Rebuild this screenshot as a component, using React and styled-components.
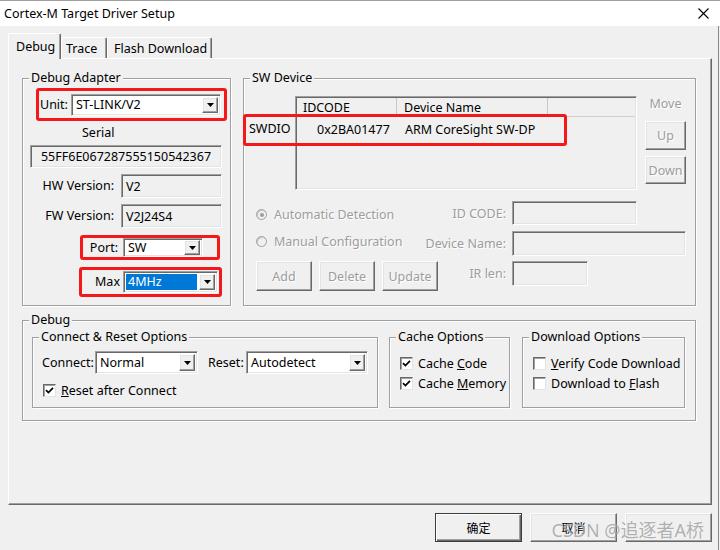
import React from "react";
import styled, { createGlobalStyle } from "styled-components";

const GlobalStyle = createGlobalStyle`
  html, body { margin: 0; padding: 0; background: #f0f0f0; }
  body {
    font-family: "Noto Sans", "Open Sans", "Noto Sans CJK SC", sans-serif;
    font-size: 12.5px;
    color: #000;
  }
  * { box-sizing: border-box; }
`;

const Window = styled.div`
  position: relative;
  width: 720px;
  height: 550px;
  background: #f0f0f0;
  overflow: hidden;
  box-shadow: inset -1px 0 0 #f0f0f0, inset -2px 0 0 #8a8a8a;
`;

const TitleBar = styled.div`
  height: 26px;
  background: #fff;
  border-top: 1px solid #a0a0a0;
  display: flex;
  align-items: center;
  justify-content: space-between;
  padding: 0 11px 0 4px;
  font-size: 12.5px;
`;

const Body = styled.div`
  padding: 7px 8px 0 8px;
`;

const TabStrip = styled.div`
  display: flex;
  align-items: flex-end;
  height: 26px;
  position: relative;
  z-index: 1;
  margin-bottom: -1px;
`;

const Tab = styled.div`
  width: ${(p) => p.$w}px;
  height: ${(p) => (p.$active ? 26 : 21)}px;
  margin-bottom: ${(p) => (p.$active ? 0 : 1)}px;
  padding-left: ${(p) => p.$pl}px;
  display: flex;
  align-items: center;
  background: #f0f0f0;
  border-top: 1px solid #fff;
  border-left: 1px solid #fff;
  border-right: 1px solid #696969;
  box-shadow: inset -1px 0 0 #a0a0a0;
  border-radius: 2px 2px 0 0;
  white-space: nowrap;
`;

const Panel = styled.div`
  width: 704px;
  height: 447px;
  border-top: 1px solid #fff;
  border-left: 1px solid #fff;
  border-right: 1px solid #696969;
  border-bottom: 1px solid #696969;
  box-shadow: inset -1px -1px 0 #a0a0a0;
  padding: 19px 0 0 13px;
  display: flex;
  flex-direction: column;
  gap: 14px;
`;

const TopRow = styled.div`
  display: flex;
  gap: 12px;
`;

const Group = styled.div`
  position: relative;
  flex-shrink: 0;
  width: ${(p) => p.$w}px;
  height: ${(p) => p.$h}px;
  margin-left: ${(p) => p.$ml || 0}px;
  border: 1px solid #a0a0a0;
  box-shadow: inset 1px 1px 0 #fff, 1px 1px 0 #fff;
`;

const Legend = styled.span`
  position: absolute;
  top: -9px;
  left: 6px;
  padding: 0 2px;
  line-height: 16px;
  background: #f0f0f0;
  white-space: nowrap;
`;

const Column = styled.div`
  display: flex;
  flex-direction: column;
  align-items: flex-start;
`;

const Annot = styled.div`
  display: flex;
  align-items: center;
  justify-content: ${(p) => (p.$spread ? "space-between" : "flex-start")};
  width: ${(p) => p.$w}px;
  height: ${(p) => p.$h}px;
  margin: ${(p) => p.$mt}px 0 0 ${(p) => p.$ml}px;
  padding: ${(p) => (p.$spread ? "0 3px 0 1px" : "0")};
  border: 3px solid #f5181a;
  border-radius: 3px;
`;

const RowOverlay = styled.div`
  position: absolute;
  left: -1px;
  top: 35px;
  width: 324px;
  height: 32px;
  border: 3px solid #f5181a;
  border-radius: 3px;
  pointer-events: none;
`;

const FieldLabel = styled.span`
  flex-shrink: 0;
  width: ${(p) => (p.$w ? `${p.$w}px` : "auto")};
  text-align: ${(p) => p.$align || "left"};
  padding: 0 ${(p) => p.$pr || 0}px 0 ${(p) => p.$pl || 0}px;
  margin-left: ${(p) => p.$ml || 0}px;
  line-height: 16px;
  white-space: nowrap;
  color: ${(p) => (p.$disabled ? "#9d9d9d" : "#000")};
  text-shadow: ${(p) => (p.$disabled ? "1px 1px 0 #fff" : "none")};
`;

const sunken = `
  border: 1px solid;
  border-color: #a0a0a0 #fff #fff #a0a0a0;
  box-shadow: inset 1px 1px 0 #696969, inset -1px -1px 0 #e3e3e3;
`;

const raised = `
  border: 1px solid;
  border-color: #fff #696969 #696969 #fff;
  box-shadow: inset -1px -1px 0 #a0a0a0, inset 1px 1px 0 #e3e3e3;
`;

const SelectBox = styled.div`
  flex-shrink: 0;
  display: flex;
  align-items: stretch;
  width: ${(p) => p.$w}px;
  height: ${(p) => p.$h || 22}px;
  background: #fff;
  ${sunken}
  padding: ${(p) => (p.$h < 21 ? "1px 2px" : "2px")};
`;

const SelectValue = styled.div`
  flex: 1;
  display: flex;
  align-items: center;
  padding-left: 2px;
  margin-right: 2px;
  line-height: 14px;
  white-space: nowrap;
  overflow: hidden;
  background: ${(p) => (p.$highlight ? "#0078d7" : "transparent")};
  color: ${(p) => (p.$highlight ? "#fff" : "#000")};
`;

const DropButton = styled.div`
  width: 16px;
  flex-shrink: 0;
  background: #f0f0f0;
  ${raised}
  display: flex;
  align-items: center;
  justify-content: center;
`;

const Arrow = () => (
  <svg width="7" height="4" viewBox="0 0 7 4">
    <polygon points="0,0 7,0 3.5,4" fill="#000" />
  </svg>
);

function Select({ w, h, value, highlight }) {
  return (
    <SelectBox $w={w} $h={h}>
      <SelectValue $highlight={highlight}>{value}</SelectValue>
      <DropButton>
        <Arrow />
      </DropButton>
    </SelectBox>
  );
}

const TextField = styled.div`
  flex-shrink: 0;
  width: ${(p) => p.$w}px;
  height: ${(p) => p.$h}px;
  margin: ${(p) => p.$mt || 0}px 0 0 ${(p) => p.$ml || 0}px;
  background: #f0f0f0;
  ${sunken}
  display: flex;
  align-items: center;
  justify-content: ${(p) => (p.$center ? "center" : "flex-start")};
  padding-left: ${(p) => (p.$center ? 0 : 4)}px;
  white-space: nowrap;
`;

const Caption = styled.div`
  margin: ${(p) => p.$mt}px 0 0 ${(p) => p.$ml}px;
  line-height: 16px;
`;

const InfoRow = styled.div`
  display: flex;
  align-items: center;
  gap: 7px;
  margin-top: 6px;
`;

/* SW device */
const DeviceTop = styled.div`
  display: flex;
  margin-top: 17px;
`;

const RowHeader = styled.div`
  width: 51px;
  padding: 25px 0 0 5px;
  line-height: 16px;
`;

const ListView = styled.div`
  width: 342px;
  height: 94px;
  ${sunken}
  background: #f0f0f0;
  padding: 1px;
`;

const ListHeader = styled.div`
  display: flex;
  height: 19px;
  border-bottom: 1px solid #d0d0d0;
`;

const HeadCell = styled.div`
  width: ${(p) => (p.$w ? `${p.$w}px` : "auto")};
  flex: ${(p) => (p.$w ? "none" : 1)};
  padding-left: ${(p) => p.$pl}px;
  display: flex;
  align-items: center;
  white-space: nowrap;
  border-right: ${(p) => (p.$w ? "1px solid #c8c8c8" : "none")};
`;

const ListRow = styled.div`
  display: flex;
  height: 24px;
  align-items: center;
`;

const Cell = styled.div`
  width: ${(p) => p.$w}px;
  padding-left: ${(p) => p.$pl}px;
  white-space: nowrap;
`;

const MoveCol = styled.div`
  width: 41px;
  margin-left: 8px;
  display: flex;
  flex-direction: column;
  align-items: stretch;
`;

const MoveLabel = styled.div`
  text-align: center;
  line-height: 16px;
  color: #9d9d9d;
  text-shadow: 1px 1px 0 #fff;
  margin-bottom: 9px;
`;

const Button = styled.div`
  flex-shrink: 0;
  width: ${(p) => (p.$w ? `${p.$w}px` : "auto")};
  height: ${(p) => p.$h}px;
  margin-top: ${(p) => p.$mt || 0}px;
  background: #f0f0f0;
  ${raised}
  ${(p) =>
    p.$default &&
    `border-color: #3c3c3c; box-shadow: inset 1px 1px 0 #fff, inset -1px -1px 0 #696969, inset -2px -2px 0 #a0a0a0;`}
  display: flex;
  align-items: center;
  justify-content: center;
  color: ${(p) => (p.$disabled ? "#9d9d9d" : "#000")};
  text-shadow: ${(p) => (p.$disabled ? "1px 1px 0 #fff" : "none")};
  font-family: ${(p) =>
    p.$cjk ? '"Noto Sans CJK SC", sans-serif' : "inherit"};
  font-size: ${(p) => (p.$cjk ? "12px" : "inherit")};
`;

const DeviceBottom = styled.div`
  display: grid;
  grid-template-columns: 157px 87px 1fr;
  grid-template-rows: 25px 25px 30px;
  column-gap: 6px;
  row-gap: 5px;
  margin-top: 11px;
  padding-left: 12px;
`;

const RadioRow = styled.div`
  display: flex;
  align-items: center;
  gap: 7px;
  align-self: center;
  margin-top: ${(p) => p.$shift || 0}px;
  white-space: nowrap;
`;

const RadioDot = styled.span`
  width: 11px;
  height: 11px;
  border-radius: 50%;
  border: 1px solid #a0a0a0;
  background: #f0f0f0;
  box-shadow: inset 1px 1px 0 #c8c8c8;
  display: flex;
  align-items: center;
  justify-content: center;
  &::after {
    content: "";
    width: 4px;
    height: 4px;
    border-radius: 50%;
    background: ${(p) => (p.$checked ? "#9d9d9d" : "transparent")};
  }
`;

const GridLabel = styled(FieldLabel)`
  align-self: ${(p) => (p.$top ? "start" : "center")};
  margin-top: ${(p) => (p.$top ? 5 : 0)}px;
`;

const ButtonRow = styled.div`
  display: flex;
  gap: 7px;
`;

/* Debug group */
const DebugRow = styled.div`
  display: flex;
  margin-top: 16px;
  padding-left: 9px;
`;

const ConnectRow = styled.div`
  display: flex;
  align-items: center;
  margin: 13px 0 0 9px;
`;

const CheckList = styled.div`
  display: flex;
  flex-direction: column;
  padding: ${(p) => p.$pt}px 0 0 ${(p) => p.$pl}px;
`;

const CheckRow = styled.div`
  display: flex;
  align-items: center;
  gap: 5px;
  height: 20px;
  white-space: nowrap;
`;

const Box = styled.span`
  width: 13px;
  height: 13px;
  flex-shrink: 0;
  background: #fff;
  border: 1px solid;
  border-color: #696969 #e3e3e3 #e3e3e3 #696969;
  box-shadow: inset 1px 1px 0 #a0a0a0;
  display: flex;
  align-items: center;
  justify-content: center;
`;

function Check({ checked, children }) {
  return (
    <CheckRow>
      <Box>
        {checked && (
          <svg width="9" height="9" viewBox="0 0 9 9">
            <path d="M1 4.2 L3.4 6.6 L8 1.8" stroke="#000" strokeWidth="1.7" fill="none" />
          </svg>
        )}
      </Box>
      <span>{children}</span>
    </CheckRow>
  );
}

const Footer = styled.div`
  display: flex;
  justify-content: flex-end;
  gap: 8px;
  margin-top: 8px;
`;

const Watermark = styled.div`
  position: absolute;
  right: 16px;
  bottom: 8px;
  font-family: "Noto Sans", "Noto Sans CJK SC", sans-serif;
  font-size: 18px;
  line-height: 24px;
  color: rgba(110, 110, 110, 0.55);
  text-shadow: 0 0 1px rgba(255, 255, 255, 0.8);
  pointer-events: none;
  white-space: nowrap;
`;

export default function App() {
  return (
    <Window>
      <GlobalStyle />
      <TitleBar>
        <span>Cortex-M Target Driver Setup</span>
        <svg width="11" height="11" viewBox="0 0 11 11">
          <path d="M0.5 0.5 L10.5 10.5 M10.5 0.5 L0.5 10.5" stroke="#000" strokeWidth="1.1" />
        </svg>
      </TitleBar>
      <Body>
        <TabStrip>
          <Tab $w={53} $pl={7} $active>Debug</Tab>
          <Tab $w={46} $pl={4}>Trace</Tab>
          <Tab $w={105} $pl={6}>Flash Download</Tab>
        </TabStrip>
        <Panel>
          <TopRow>
            <Group $w={209} $h={228}>
              <Legend>Debug Adapter</Legend>
              <Column>
                <Annot $w={191} $h={33} $mt={9} $ml={13} $spread>
                  <FieldLabel>Unit:</FieldLabel>
                  <Select w={150} h={22} value="ST-LINK/V2" />
                </Annot>
                <Caption $mt={4} $ml={59}>Serial</Caption>
                <TextField $w={192} $h={23} $mt={4} $ml={7} $center>
                  55FF6E067287555150542367
                </TextField>
                <InfoRow>
                  <FieldLabel $w={91} $align="right">HW Version:</FieldLabel>
                  <TextField $w={101} $h={24}>V2</TextField>
                </InfoRow>
                <InfoRow>
                  <FieldLabel $w={91} $align="right">FW Version:</FieldLabel>
                  <TextField $w={101} $h={24}>V2J24S4</TextField>
                </InfoRow>
                <Annot $w={140} $h={25} $mt={7} $ml={57}>
                  <FieldLabel $w={40} $align="right" $pr={5}>Port:</FieldLabel>
                  <Select w={80} h={19} value="SW" />
                </Annot>
                <Annot $w={143} $h={30} $mt={7} $ml={56}>
                  <FieldLabel $w={41} $align="right" $pr={3}>Max</FieldLabel>
                  <Select w={95} h={22} value="4MHz" highlight />
                </Annot>
              </Column>
            </Group>
            <Group $w={453} $h={228}>
              <Legend>SW Device</Legend>
              <DeviceTop>
                <RowHeader>SWDIO</RowHeader>
                <ListView>
                  <ListHeader>
                    <HeadCell $w={100} $pl={6}>IDCODE</HeadCell>
                    <HeadCell $w={151} $pl={7}>Device Name</HeadCell>
                    <HeadCell $pl={0} />
                  </ListHeader>
                  <ListRow>
                    <Cell $w={100} $pl={20}>0x2BA01477</Cell>
                    <Cell $w={200} $pl={8}>ARM CoreSight SW-DP</Cell>
                  </ListRow>
                </ListView>
                <MoveCol>
                  <MoveLabel>Move</MoveLabel>
                  <Button $h={29} $disabled>Up</Button>
                  <Button $h={28} $mt={6} $disabled>Down</Button>
                </MoveCol>
              </DeviceTop>
              <DeviceBottom>
                <RadioRow $shift={2}>
                  <RadioDot $checked />
                  <FieldLabel $disabled>Automatic Detection</FieldLabel>
                </RadioRow>
                <GridLabel $align="right" $disabled>ID CODE:</GridLabel>
                <TextField $w={125} $h={24} />
                <RadioRow $shift={-4}>
                  <RadioDot />
                  <FieldLabel $disabled>Manual Configuration</FieldLabel>
                </RadioRow>
                <GridLabel $align="right" $disabled>Device Name:</GridLabel>
                <TextField $w={174} $h={25} />
                <ButtonRow>
                  <Button $w={56} $h={30} $disabled>Add</Button>
                  <Button $w={56} $h={30} $disabled>Delete</Button>
                  <Button $w={56} $h={30} $disabled>Update</Button>
                </ButtonRow>
                <GridLabel $align="right" $disabled $top>IR len:</GridLabel>
                <TextField $w={76} $h={25} />
              </DeviceBottom>
              <RowOverlay />
            </Group>
          </TopRow>
          <Group $w={674} $h={101}>
            <Legend>Debug</Legend>
            <DebugRow>
              <Group $w={346} $h={71}>
                <Legend>Connect &amp; Reset Options</Legend>
                <ConnectRow>
                  <FieldLabel $w={53}>Connect:</FieldLabel>
                  <Select w={103} h={23} value="Normal" />
                  <FieldLabel $w={38} $ml={10}>Reset:</FieldLabel>
                  <Select w={122} h={23} value="Autodetect" />
                </ConnectRow>
                <CheckList $pt={6} $pl={10}>
                  <Check checked>
                    <u>R</u>eset after Connect
                  </Check>
                </CheckList>
              </Group>
              <Group $w={121} $h={71} $ml={11}>
                <Legend>Cache Options</Legend>
                <CheckList $pt={15} $pl={10}>
                  <Check checked>
                    Cache <u>C</u>ode
                  </Check>
                  <Check checked>
                    Cache <u>M</u>emory
                  </Check>
                </CheckList>
              </Group>
              <Group $w={163} $h={71} $ml={12}>
                <Legend>Download Options</Legend>
                <CheckList $pt={15} $pl={10}>
                  <Check>
                    <u>V</u>erify Code Download
                  </Check>
                  <Check>
                    Download to <u>F</u>lash
                  </Check>
                </CheckList>
              </Group>
            </DebugRow>
          </Group>
        </Panel>
        <Footer>
          <Button $w={87} $h={29} $default $cjk>确定</Button>
          <Button $w={87} $h={29} $cjk>取消</Button>
          <Button $w={87} $h={29} $cjk $disabled />
        </Footer>
      </Body>
      <Watermark>CSDN @追逐者A桥</Watermark>
    </Window>
  );
}
